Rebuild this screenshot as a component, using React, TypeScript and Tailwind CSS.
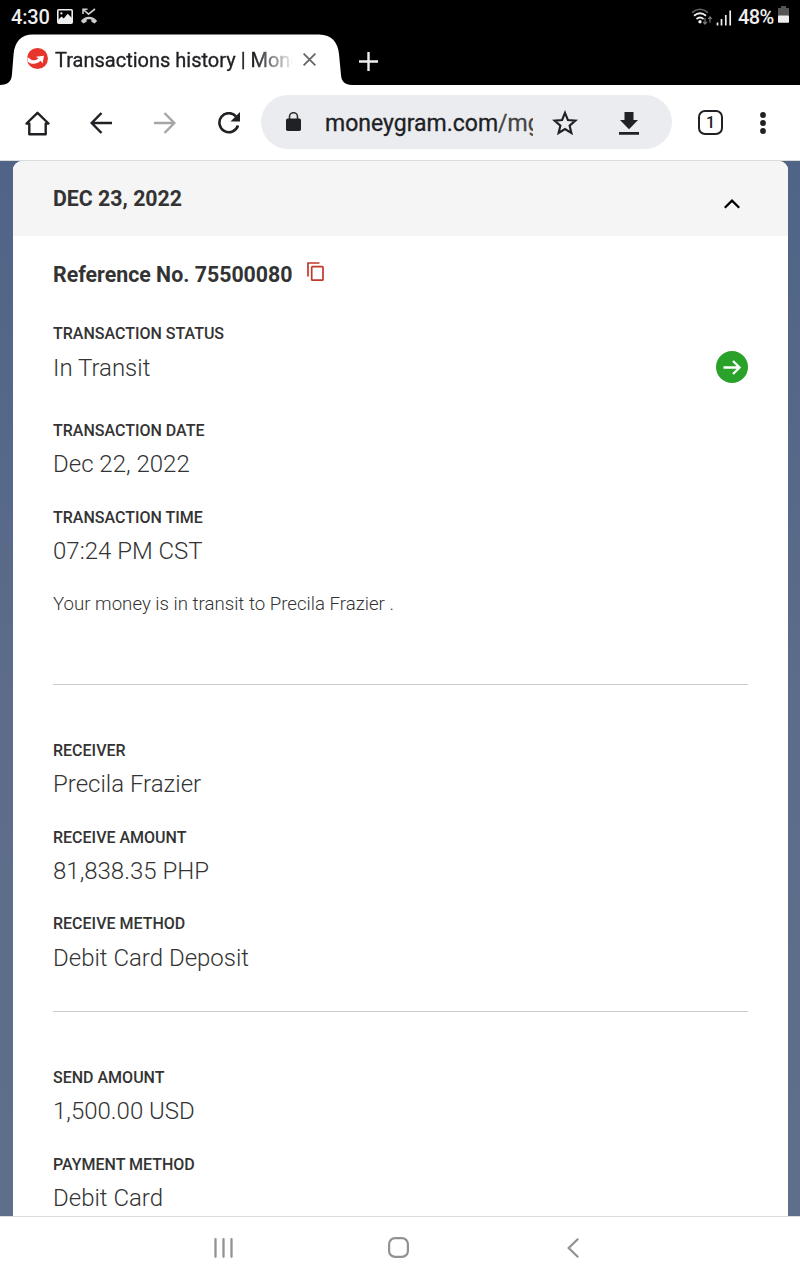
import React from "react"

type FieldData = { label: string; value: string }

const receiverFields: FieldData[] = [
  { label: "RECEIVER", value: "Precila Frazier" },
  { label: "RECEIVE AMOUNT", value: "81,838.35 PHP" },
  { label: "RECEIVE METHOD", value: "Debit Card Deposit" },
]

const sendFields: FieldData[] = [
  { label: "SEND AMOUNT", value: "1,500.00 USD" },
  { label: "PAYMENT METHOD", value: "Debit Card" },
]

function Field({ label, value }: FieldData) {
  return (
    <div className="pt-px">
      <div className="h-5 text-[16px] leading-5 font-medium text-[#333]">{label}</div>
      <div className="mt-[7.33px] h-8 text-[24px] leading-8 font-light text-[#333]">{value}</div>
    </div>
  )
}

function StatusBar() {
  return (
    <div className="flex h-[34px] shrink-0 items-center bg-black pl-[11px] text-[20px] font-medium text-[#eee]">
      <span className="w-[46px] tracking-[-0.2px]">4:30</span>
      <svg className="-mt-px shrink-0" width="16" height="15" viewBox="0 0 16 15">
        <rect x="0.8" y="0.8" width="14.4" height="13.4" rx="1" fill="none" stroke="#eee" strokeWidth="1.6" />
        <circle cx="4.4" cy="4.4" r="1.1" fill="#eee" />
        <path d="M1 13V11l3.5-3.5 2.2 2 4-4.8L15 9v5H1z" fill="#eee" />
      </svg>
      <svg className="-mt-0.5 ml-[7px] shrink-0" width="18" height="16" viewBox="0 0 18 16" fill="none">
        <path d="M3 6V1.2h4.500M3.300 1.500l5.200 4.600L15 1" stroke="#ccc" strokeWidth="1.600" />
        <path d="M.8 13C5 7.200 13 7.200 17.200 13l-2.600 2.500-3.200-1.800v-2c-1.600-.5-3.200-.5-4.800 0v2l-3.200 1.800z" fill="#ccc" />
      </svg>
      <svg className="ml-auto shrink-0" width="42" height="18" viewBox="0 0 42 18" fill="none">
        <path d="M1 4.700Q9-2.200 17 4.700" stroke="#666" strokeWidth="1.600" />
        <path d="M3 7.800Q9 2.800 15 7.800M5.500 11Q9 8 12.500 11" stroke="#eee" strokeWidth="1.800" />
        <circle cx="9" cy="13.700" r="1.700" fill="#eee" />
        <path d="M14 10v5.500M12.200 14l1.800 2 1.800-2M19 14.500V9M17.200 10.800l1.800-2 1.800 2" stroke="#777" strokeWidth="1.200" />
        <path d="M26.500 14.500v3M30.500 11v6.500M34.800 7v10.500M39.200 2.500v15" stroke="#eee" strokeWidth="1.700" />
      </svg>
      <span className="ml-[5px] w-10 whitespace-nowrap text-[20px] tracking-[-0.6px]">48%</span>
      <svg className="-mt-[5px] mr-[11px] shrink-0" width="11" height="17" viewBox="0 0 11 17">
        <path d="M3 0h5v2h3v8H0V2h3z" fill="#555" />
        <rect y="9.500" width="11" height="7.200" rx="0.800" fill="#eee" />
      </svg>
    </div>
  )
}

function TabStrip() {
  return (
    <div className="relative flex h-[51px] shrink-0 items-center bg-black">
      {/* tab silhouette */}
      <svg className="absolute top-0 left-0" width="352" height="51" viewBox="0 0 352 51">
        <path d="M0 51C8 50.500 11.500 48 12 40L13.500 21C14.500 8 21 .6 33 .6H319C332 .6 338 9 339 20L341 41C341.500 48 345 50.500 352 51z" fill="#fff" />
      </svg>
      <div className="relative flex h-full w-[340px] items-center pl-[27px]">
        <svg className="-mt-0.5 shrink-0" width="21" height="21" viewBox="0 0 21 21">
          <circle cx="10.500" cy="10.500" r="10.500" fill="#e8352b" />
          <path d="M.2 9.500 2.300 10C4 12.700 8.500 13.200 11.500 10.500L9 8.800 17 7.800 15.500 15.500 13.700 12.800C9.500 17 3.500 16.500 .8 13.500z" fill="#fff" />
        </svg>
        <div className="ml-[7px] w-[237px] overflow-hidden text-[20px] whitespace-nowrap text-[#202124] [-webkit-text-stroke:0.3px] [mask-image:linear-gradient(to_right,black_200px,transparent_240px)]">
          Transactions history | MoneyGram
        </div>
        <svg className="ml-[11px] shrink-0" width="13" height="13" viewBox="0 0 13 13" stroke="#666" strokeWidth="1.800">
          <path d="M.6.6l11.800 11.800M12.400.6.6 12.400" />
        </svg>
      </div>
      <svg className="relative mt-[3px] ml-[19px]" width="19" height="19" viewBox="0 0 19 19" stroke="#eee" strokeWidth="2.400">
        <path d="M9.500 0v19M0 9.500h19" />
      </svg>
    </div>
  )
}

function Toolbar() {
  return (
    <div className="flex h-[76px] shrink-0 items-center border-b border-[#dadcdc] bg-white pl-[25px]">
      <svg className="mt-px shrink-0" width="25" height="25" viewBox="0 0 25 25" fill="none" stroke="#202124" strokeWidth="2.400" strokeLinejoin="round">
        <path d="M1.500 12.500 12.500 1.800l11 10.700H20.700V23.200H4.300V12.500z" />
      </svg>
      <svg className="ml-10 shrink-0" width="22" height="22" viewBox="0 0 22 22" fill="none" stroke="#202124" strokeWidth="2.500">
        <path d="M22 11H2M11.500 1 1.700 11l9.800 10" />
      </svg>
      <svg className="ml-[42px] shrink-0" width="22" height="22" viewBox="0 0 22 22" fill="none" stroke="#a6a6a6" strokeWidth="2.500">
        <path d="M0 11h20M10.500 1l9.800 10-9.800 10" />
      </svg>
      <svg className="mt-px ml-[42px] shrink-0" width="22" height="22" viewBox="0 0 22 22">
        <path d="M20 13.500A9.500 9.500 0 1 1 18 4.300" fill="none" stroke="#202124" strokeWidth="2.600" />
        <path d="M22 0v9.500h-9.500z" fill="#202124" />
      </svg>
      <div className="-mt-0.5 ml-[21px] flex h-[54px] w-[411px] shrink-0 items-center rounded-full bg-[#ebecf0] pl-[25px]">
        <svg className="-mt-px shrink-0" width="15" height="19" viewBox="0 0 15 19">
          <path d="M3.500 8V4.700a4 4 0 0 1 8 0V8" fill="none" stroke="#333" strokeWidth="1.600" />
          <rect y="6.500" width="15" height="12.500" rx="1.700" fill="#202124" />
        </svg>
        <div className="mt-[5px] ml-6 w-[208px] overflow-hidden text-[23px] whitespace-nowrap text-[#202124] [-webkit-text-stroke:0.3px]">
          moneygram.com<span className="text-[#444]">/mgo</span>
        </div>
        <svg className="mt-0.5 ml-[19px] shrink-0" width="26" height="25" viewBox="0 0 26 25" fill="none" stroke="#202124" strokeWidth="2.100">
          <path d="m13 2.800 2.900 7.200 7.500.6-5.800 5 1.800 7.400L13 19l-6.400 4 1.800-7.400-5.800-5 7.500-.6z" />
        </svg>
        <svg className="mt-1 ml-[41px] shrink-0" width="20" height="23" viewBox="0 0 20 23" fill="#202124">
          <path d="M5.500 0h9v8H19l-9 9.300L1 8h4.500zM0 20h20v2.700H0z" />
        </svg>
      </div>
      <div className="ml-[26px] flex h-[25px] w-[25px] shrink-0 items-center justify-center rounded-[7px] border-[2.400px] border-[#202124] text-[16px] font-medium text-[#202124]">1</div>
      <svg className="ml-[37px] shrink-0" width="6" height="22" viewBox="0 0 6 22" fill="#202124">
        <circle cx="3" cy="3" r="2.900" />
        <circle cx="3" cy="11" r="2.900" />
        <circle cx="3" cy="19" r="2.900" />
      </svg>
    </div>
  )
}

function TransactionCard() {
  return (
    <div className="mr-3 ml-[13px] h-full overflow-hidden rounded-t-[9px] bg-white text-[#333]">
      <div className="flex h-[75px] items-center justify-between bg-[#f5f5f5] pr-12 pl-10">
        <span className="text-[21.33px] leading-[30px] font-bold">DEC 23, 2022</span>
        <svg className="mt-[10px]" width="16" height="10" viewBox="0 0 16 10" fill="none" stroke="#000" strokeWidth="2.300">
          <path d="M.8 8.800 8 1.700l7.200 7.100" />
        </svg>
      </div>

      <div className="px-10">
        <div className="flex h-[87.33px] items-start pt-6">
          <span className="mt-px text-[21.33px] leading-[28px] font-bold">Reference No. 75500080</span>
          <svg className="mt-[2px] ml-[14px]" width="17" height="20" viewBox="0 0 17 20" fill="none" stroke="#c0392b" strokeWidth="1.700">
            <path d="M1 14.500V1h11.500" />
            <rect x="4.700" y="4.700" width="11.300" height="13.500" rx="0.800" />
          </svg>
        </div>

        <div className="flex items-start justify-between">
          <Field label="TRANSACTION STATUS" value="In Transit" />
          <svg className="mt-[27.67px]" width="32" height="32" viewBox="0 0 32 32">
            <circle cx="16" cy="16" r="16" fill="#2aa22a" />
            <path d="M7.500 16.500H23M17 10l6.500 6.500L17 23" fill="none" stroke="#fff" strokeWidth="2.300" />
          </svg>
        </div>
        <div className="mt-[36.33px] flex flex-col gap-[26.33px]">
          <Field label="TRANSACTION DATE" value="Dec 22, 2022" />
          <Field label="TRANSACTION TIME" value="07:24 PM CST" />
        </div>
        <p className="mt-[25px] text-[18.67px] leading-6 font-light">Your money is in transit to Precila Frazier .</p>

        <div className="mt-[68px] flex flex-col gap-[26.33px] border-t border-[#ccc] pt-[55px]">
          {receiverFields.map((f) => (
            <Field key={f.label} {...f} />
          ))}
        </div>
        <div className="mt-[37.33px] flex flex-col gap-[26.33px] border-t border-[#ccc] pt-[55px]">
          {sendFields.map((f) => (
            <Field key={f.label} {...f} />
          ))}
        </div>
      </div>
    </div>
  )
}

function NavBar() {
  return (
    <div className="flex h-16 shrink-0 items-center border-t border-[#dcdcdc] bg-white pb-0.5 pl-[214px]">
      <svg width="19" height="20" viewBox="0 0 19 20" stroke="#929292" strokeWidth="2.300" strokeLinecap="round">
        <path d="M1.500 1.200v17.600M9.500 1.200v17.600M17.500 1.200v17.600" />
      </svg>
      <svg className="ml-[155px]" width="21" height="21" viewBox="0 0 21 21" fill="none" stroke="#929292" strokeWidth="2.200">
        <rect x="1.100" y="1.100" width="18.800" height="18.800" rx="6" />
      </svg>
      <svg className="ml-[158px]" width="12" height="20" viewBox="0 0 12 20" fill="none" stroke="#929292" strokeWidth="2.200">
        <path d="M11.200.8 1.700 10l9.500 9.200" />
      </svg>
    </div>
  )
}

export default function App() {
  return (
    <div className="flex h-[1280px] w-[800px] flex-col overflow-hidden bg-white font-['Roboto',sans-serif]">
      <StatusBar />
      <TabStrip />
      <Toolbar />
      <main className="min-h-0 flex-1 overflow-hidden bg-linear-to-b from-[#4f6487] via-[#5c6c8a] to-[#5e6f8b]">
        <TransactionCard />
      </main>
      <NavBar />
    </div>
  )
}
